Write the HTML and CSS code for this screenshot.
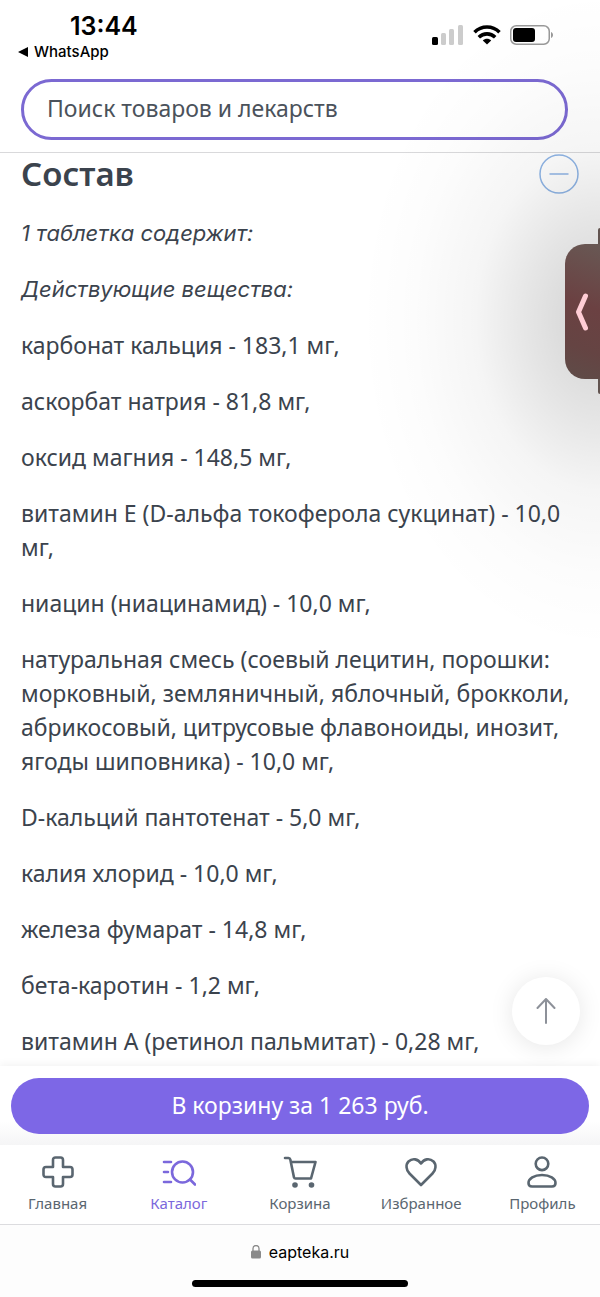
FILE: index.html
```html
<!DOCTYPE html>
<html lang="ru">
<head>
  <meta charset="UTF-8">
  <meta name="viewport" content="width=device-width, initial-scale=1.0">
  <title>Состав</title>
  <link rel="stylesheet" href="styles.css">
</head>
<body>
  <div class="page">
    <div class="status">
      <div class="status-left">
        <div class="time">13:44</div>
        <a class="back" href="#">
          <svg width="10" height="10" viewBox="0 0 10 10"><path d="M0 5L10 0V10Z" fill="#000"/></svg>
          WhatsApp
        </a>
      </div>
      <div class="status-icons">
        <svg width="32" height="20" viewBox="0 0 32 20">
          <rect x="0" y="12" width="6" height="8" rx="1.5" fill="#000"/>
          <rect x="9" y="8" width="5" height="12" rx="1.5" fill="#ccc"/>
          <rect x="17" y="4" width="5" height="16" rx="1.5" fill="#ccc"/>
          <rect x="26" y="0" width="5" height="20" rx="1.5" fill="#ccc"/>
        </svg>
        <svg width="28" height="20" viewBox="0 0 28 20" fill="none" stroke="#000" stroke-width="3.6">
          <path d="M1.5 7.2C8.5 .3 19.5 .3 26.5 7.2"/>
          <path d="M5.8 12.2C10.5 7.8 17.5 7.8 22.2 12.2"/>
          <path d="M14 19.5L9.8 15.4C12 13.3 16 13.3 18.2 15.4Z" fill="#000" stroke="none"/>
        </svg>
        <svg width="44" height="20" viewBox="0 0 44 20">
          <rect x=".75" y=".75" width="38.5" height="18.5" rx="5.5" fill="none" stroke="#999" stroke-width="1.5"/>
          <rect x="3" y="3" width="22" height="14" rx="3" fill="#000"/>
          <path d="M41 7C43.7 8 43.7 12 41 13Z" fill="#999"/>
        </svg>
      </div>
    </div>

    <header class="header">
      <input class="search" type="search" placeholder="Поиск товаров и лекарств" aria-label="Поиск товаров и лекарств">
    </header>

    <main class="content">
      <div class="title-row">
        <h1>Состав</h1>
        <button class="collapse" aria-label="Свернуть">
          <svg width="40" height="40" viewBox="0 0 40 40" fill="none" stroke="#8fb5e6" stroke-width="1.5">
            <circle cx="20" cy="20" r="19"/>
            <path d="M10.5 20H29.5"/>
          </svg>
        </button>
      </div>
      <p><em>1 таблетка содержит:</em></p>
      <p><em>Действующие вещества:</em></p>
      <p>карбонат кальция - 183,1 мг,</p>
      <p>аскорбат натрия - 81,8 мг,</p>
      <p>оксид магния - 148,5 мг,</p>
      <p>витамин Е (D-альфа токоферола сукцинат) - 10,0 мг,</p>
      <p>ниацин (ниацинамид) - 10,0 мг,</p>
      <p>натуральная смесь (соевый лецитин, порошки: морковный, земляничный, яблочный, брокколи, абрикосовый, цитрусовые флавоноиды, инозит, ягоды шиповника) - 10,0 мг,</p>
      <p>D-кальций пантотенат - 5,0 мг,</p>
      <p>калия хлорид - 10,0 мг,</p>
      <p>железа фумарат - 14,8 мг,</p>
      <p>бета-каротин - 1,2 мг,</p>
      <p>витамин А (ретинол пальмитат) - 0,28 мг,</p>
      <button class="to-top" aria-label="Наверх">
        <svg width="20" height="26" viewBox="0 0 20 26" fill="none" stroke="#8d9199" stroke-width="2" stroke-linecap="round" stroke-linejoin="round">
          <path d="M10 25V1M1.5 10L10 1L18.5 10"/>
        </svg>
      </button>
    </main>

    <div class="buy">
      <button class="buy-button">В корзину за 1 263 руб.</button>
    </div>

    <nav class="tabs">
      <a class="tab" href="#">
        <svg width="34" height="34" viewBox="0 0 34 34">
          <path d="M14.5 2.5H19.5Q22 2.5 22 5V12H29Q31.5 12 31.5 14.5V19.5Q31.5 22 29 22H22V29Q22 31.5 19.5 31.5H14.5Q12 31.5 12 29V22H5Q2.5 22 2.5 19.5V14.5Q2.5 12 5 12H12V5Q12 2.5 14.5 2.5Z"/>
        </svg>
        Главная
      </a>
      <a class="tab active" href="#">
        <svg width="34" height="34" viewBox="0 0 34 34">
          <circle cx="20.5" cy="17" r="10.5"/>
          <path d="M28 24.5L33 29.5M2 7H9M2 17H6M2 27H9"/>
        </svg>
        Каталог
      </a>
      <a class="tab" href="#">
        <svg width="34" height="34" viewBox="0 0 34 34">
          <path d="M2 3H5.5Q7 3 7.3 4.5L11 22.5Q11.3 23.5 12.5 23.5H28L32.5 7H8"/>
          <circle class="dot" cx="12" cy="30" r="2.8"/>
          <circle class="dot" cx="28.5" cy="30" r="2.8"/>
        </svg>
        Корзина
      </a>
      <a class="tab" href="#">
        <svg width="34" height="34" viewBox="0 0 34 34">
          <path d="M17 30L5.5 18.5C2 15 1.5 9.5 4.5 6.5C8.5 2.8 14 3.8 17 8.5C20 3.8 25.5 2.8 29.5 6.5C32.5 9.5 32 15 28.5 18.5Z"/>
        </svg>
        Избранное
      </a>
      <a class="tab" href="#">
        <svg width="34" height="34" viewBox="0 0 34 34">
          <circle cx="17" cy="8.8" r="6.3"/>
          <path d="M17 20C9 20 3.5 23.5 3.5 28Q3.5 31.5 7 31.5H27Q30.5 31.5 30.5 28C30.5 23.5 25 20 17 20Z"/>
        </svg>
        Профиль
      </a>
    </nav>

    <footer class="browser">
      <a class="address" href="#">
        <svg width="10" height="14" viewBox="0 0 10 14">
          <path d="M2 6V3.5A3 3 0 0 1 8 3.5V6" fill="none" stroke="#8a8a8a" stroke-width="1.3"/>
          <rect x="0" y="5.5" width="10" height="8" rx="1.5" fill="#8a8a8a"/>
        </svg>
        eapteka.ru
      </a>
      <div class="home-bar"></div>
    </footer>

    <div class="side-shade"></div>
    <div class="side-edge"></div>
    <button class="side-tab" aria-label="Открыть панель">
      <svg width="14" height="40" viewBox="0 0 14 40" fill="none" stroke="#ffcdd5" stroke-width="5" stroke-linecap="round" stroke-linejoin="round">
        <path d="M10.5 4L3.5 20L10.5 36"/>
      </svg>
    </button>
  </div>
</body>
</html>
```
FILE: styles.css
```css
* {
  box-sizing: border-box;
}
body {
  margin: 0;
  background: #fff;
  color: #3b434d;
  font-family: "Noto Sans", sans-serif;
  font-size: 23px;
  line-height: 34px;
}
button {
  border: none;
  padding: 0;
  background: none;
  font: inherit;
  cursor: pointer;
}
a {
  color: inherit;
  text-decoration: none;
}
svg {
  display: block;
  flex: none;
}
.page {
  position: relative;
  display: flex;
  flex-direction: column;
  min-height: 100vh;
  overflow: hidden;
}

/* status bar */
.status {
  display: flex;
  justify-content: space-between;
  padding: 10px 46px 0 18px;
  color: #000;
  font-family: Inter, sans-serif;
}
.status-left {
  display: flex;
  flex-direction: column;
}
.time {
  padding-left: 52px;
  font-size: 25px;
  font-weight: 600;
  line-height: 32px;
}
.back {
  display: flex;
  align-items: center;
  gap: 6px;
  font-size: 15px;
  font-weight: 500;
  line-height: 20px;
}
.status-icons {
  display: flex;
  gap: 9px;
  padding-top: 15px;
}

.header {
  padding: 17px 32px 12px 21px;
  border-bottom: 1px solid #d9d9db;
}
.search {
  display: block;
  width: 100%;
  height: 61px;
  padding: 0 23px 4px;
  border: 3px solid #7b69d2;
  border-radius: 31px;
  background: #fff;
  color: #3b434d;
  font: inherit;
}
.search::placeholder {
  color: #4b525b;
  opacity: 1;
}

/* composition text */
.content {
  position: relative;
  flex: 1;
  padding: 1px 21px 7px;
}
.title-row {
  display: flex;
  justify-content: space-between;
  align-items: center;
  margin-bottom: 22px;
}
h1 {
  margin: 0;
  font-size: 33px;
  font-weight: 600;
  line-height: 40px;
}
p {
  margin: 0 0 22px;
}
p:last-of-type {
  margin-bottom: 0;
}
em {
  display: block;
  font-family: Inter, sans-serif;
  font-size: 22px;
}
.to-top {
  position: absolute;
  right: 20px;
  bottom: 21px;
  display: flex;
  align-items: center;
  justify-content: center;
  width: 68px;
  height: 68px;
  border-radius: 50%;
  background: #fff;
  box-shadow: 0 2px 24px rgba(0, 0, 0, 0.1);
}

.buy {
  position: relative;
  padding: 12px 11px 11px;
  background: linear-gradient(#fff 70%, #f5f5f6);
  box-shadow: 0 -2px 8px rgba(0, 0, 0, 0.05);
}
.buy-button {
  display: block;
  width: 100%;
  height: 56px;
  padding-bottom: 2px;
  border-radius: 28px;
  background: #7d67e6;
  color: #fff;
}

/* bottom navigation */
.tabs {
  position: relative;
  display: grid;
  grid-template-columns: repeat(5, 1fr);
  margin: 0 -3px;
  padding: 10px 0 11px;
  border-bottom: 1px solid #dcdcdf;
  background: #fff;
}
.tab {
  display: flex;
  flex-direction: column;
  align-items: center;
  gap: 4px;
  color: #5a6670;
  font-size: 15px;
  line-height: 20px;
}
.tab svg {
  fill: none;
  stroke: currentColor;
  stroke-width: 2.6;
  stroke-linecap: round;
  stroke-linejoin: round;
}
.tab .dot {
  fill: currentColor;
  stroke: none;
}
.tab.active {
  color: #7b68dc;
}

.browser {
  display: flex;
  flex-direction: column;
  align-items: center;
  gap: 17px;
  padding: 16px 0 10px;
  background: #fdfdfd;
}
.address {
  display: flex;
  align-items: center;
  gap: 8px;
  color: #000;
  font-family: Inter, sans-serif;
  font-size: 16px;
  line-height: 22px;
}
.home-bar {
  width: 36%;
  height: 7px;
  border-radius: 4px;
  background: #000;
}

/* system panel handle over the page edge */
.side-shade {
  position: absolute;
  top: 0;
  right: 0;
  width: 240px;
  height: 660px;
  background: radial-gradient(ellipse 240px 330px at 100% 320px, rgba(0, 0, 0, 0.18), rgba(0, 0, 0, 0.1) 30%, rgba(0, 0, 0, 0.04) 52%, rgba(0, 0, 0, 0.01) 78%, transparent);
  pointer-events: none;
}
.side-edge {
  position: absolute;
  top: 228px;
  right: 0;
  width: 2px;
  height: 166px;
  border-radius: 2px 0 0 2px;
  background: #625450;
}
.side-tab {
  position: absolute;
  top: 244px;
  right: 0;
  display: flex;
  align-items: center;
  padding-left: 10px;
  width: 35px;
  height: 135px;
  border-radius: 20px 0 0 20px;
  background: linear-gradient(200deg, #685854, #6b4142 45%, #654443 75%, #5e4c48);
}
```
